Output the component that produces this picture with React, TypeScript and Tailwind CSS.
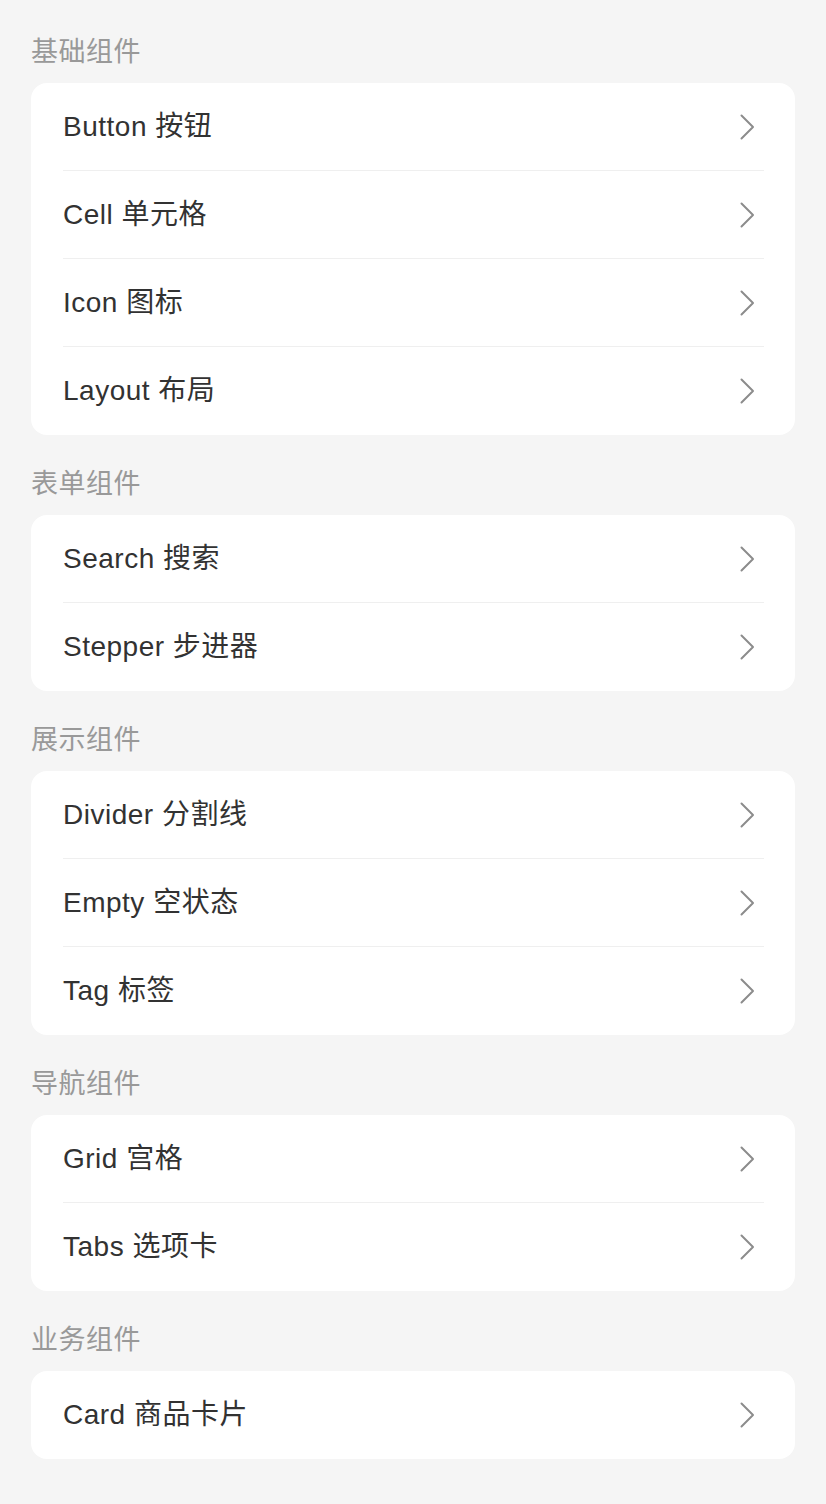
import React from 'react';

interface Item {
  en: string;
  zh: string;
}

interface Section {
  title: string;
  items: Item[];
}

const sections: Section[] = [
  {
    title: '基础组件',
    items: [
      { en: 'Button', zh: '按钮' },
      { en: 'Cell', zh: '单元格' },
      { en: 'Icon', zh: '图标' },
      { en: 'Layout', zh: '布局' },
    ],
  },
  {
    title: '表单组件',
    items: [
      { en: 'Search', zh: '搜索' },
      { en: 'Stepper', zh: '步进器' },
    ],
  },
  {
    title: '展示组件',
    items: [
      { en: 'Divider', zh: '分割线' },
      { en: 'Empty', zh: '空状态' },
      { en: 'Tag', zh: '标签' },
    ],
  },
  {
    title: '导航组件',
    items: [
      { en: 'Grid', zh: '宫格' },
      { en: 'Tabs', zh: '选项卡' },
    ],
  },
  {
    title: '业务组件',
    items: [{ en: 'Card', zh: '商品卡片' }],
  },
];

const Chevron = () => (
  <svg width="16" height="28" viewBox="0 0 16 28" fill="none" className="shrink-0">
    <path d="M2.5 2.5 L14 14 L2.5 25.5" stroke="#8c8c8c" strokeWidth="2" strokeLinecap="round" strokeLinejoin="round" />
  </svg>
);

export default function App() {
  return (
    <div
      className="min-h-[1504px] bg-[#f5f5f5] px-[31px] pt-[3px] pb-[45px]"
      style={{ fontFamily: '"Liberation Sans", "Noto Sans CJK SC", sans-serif' }}
    >
      {sections.map((s) => (
        <div key={s.title}>
          <div className="pt-[32px] pb-[14px] text-[27px] leading-[34px] tracking-[0.5px] text-[#999999]">{s.title}</div>
          <div className="rounded-[16px] bg-white">
            {s.items.map((it, i) => (
              <div key={it.en} className="pl-[32px] pr-[31px]">
                <div
                  className={`flex h-[88px] items-center justify-between pr-[9px] ${
                    i < s.items.length - 1 ? 'border-b border-[#efefef]' : ''
                  }`}
                >
                  <span className="text-[28px] tracking-[0.5px] text-[#323232]">
                    {it.en} {it.zh}
                  </span>
                  <Chevron />
                </div>
              </div>
            ))}
          </div>
        </div>
      ))}
    </div>
  );
}
